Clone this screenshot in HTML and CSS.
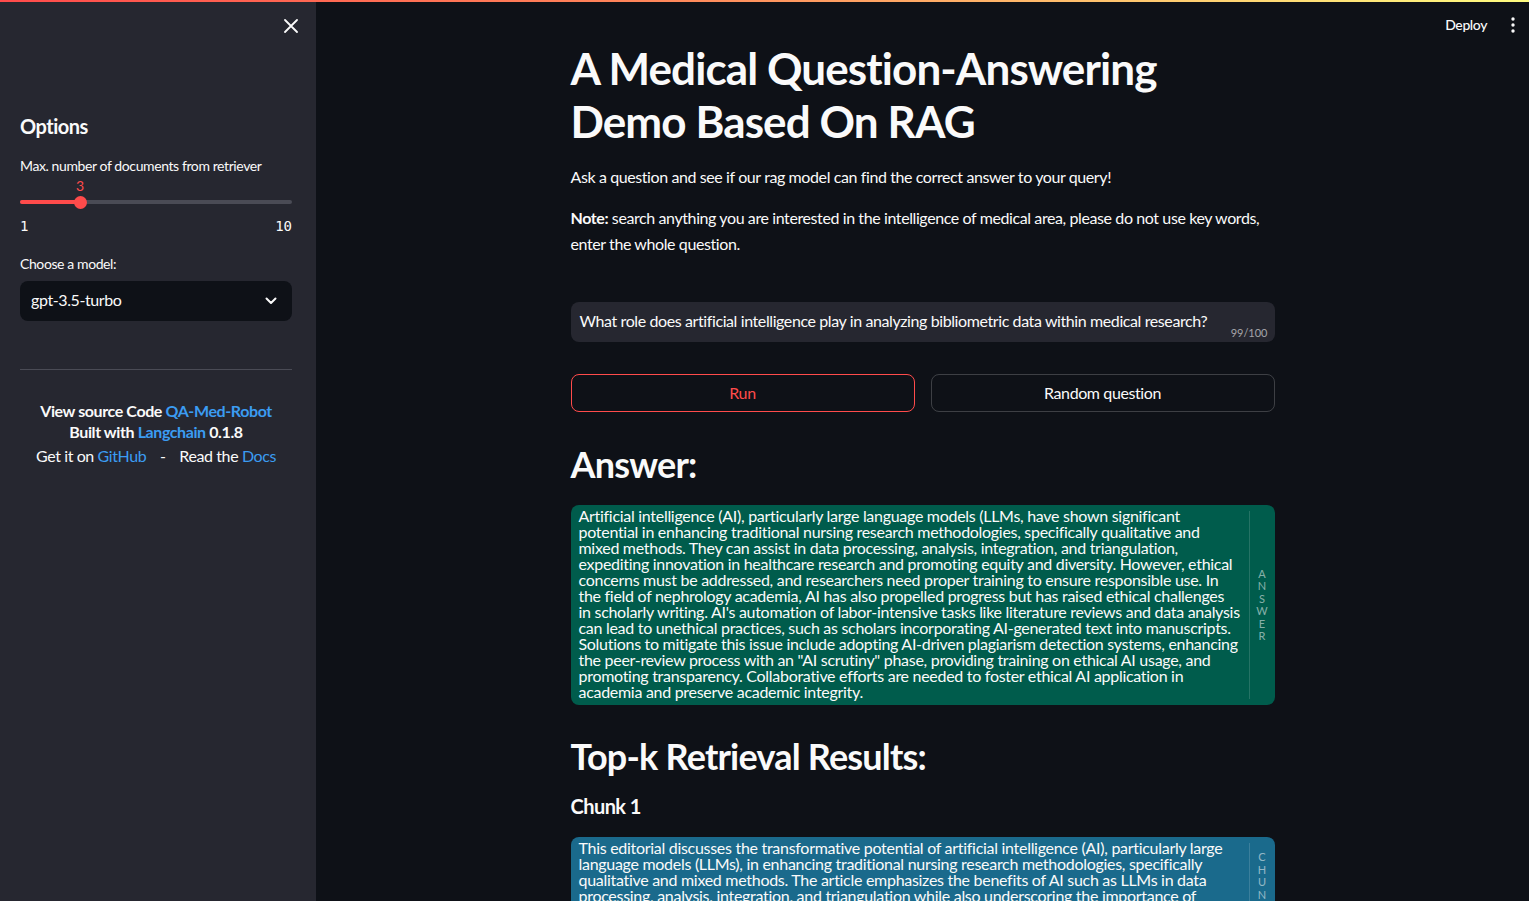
FILE: index.html
```html
<!DOCTYPE html>
<html lang="en">
<head>
<meta charset="utf-8">
<title>Medical QA RAG Demo</title>
<link rel="stylesheet" href="styles.css">
</head>
<body>
<div class="app">
  <div class="topline"></div>
  <aside class="sidebar">
    <div class="close-row">
      <svg class="close" width="14" height="14" viewBox="0 0 14 14"><path d="M1 1L13 13M13 1L1 13" stroke="#fafafa" stroke-width="1.8" stroke-linecap="round"/></svg>
    </div>
    <h2 class="side-title">Options</h2>
    <div class="side-label">Max. number of documents from retriever</div>
    <div class="slider">
      <div class="slider-value">3</div>
      <div class="track"><div class="fill" style="width:22.2%"></div><div class="thumb" style="left:22.2%"></div></div>
      <div class="ticks"><span>1</span><span>10</span></div>
    </div>
    <div class="side-label model-label">Choose a model:</div>
    <div class="select">
      <span>gpt-3.5-turbo</span>
      <svg width="12" height="8" viewBox="0 0 12 8"><path d="M1.5 1.5L6 6L10.5 1.5" stroke="#fafafa" stroke-width="2" fill="none" stroke-linecap="round" stroke-linejoin="round"/></svg>
    </div>
    <hr class="side-hr">
    <div class="credits">
      <div class="bold">View source Code <a href="#">QA-Med-Robot</a></div>
      <div class="bold">Built with <a href="#">Langchain</a> 0.1.8</div>
      <div class="plain">Get it on <a href="#">GitHub</a> <span class="dash">-</span> Read the <a href="#">Docs</a></div>
    </div>
  </aside>
  <main class="main">
    <header class="header">
      <span class="deploy">Deploy</span>
      <svg width="4" height="16" viewBox="0 0 4 16"><circle cx="2" cy="2" r="1.7" fill="#fafafa"/><circle cx="2" cy="8" r="1.7" fill="#fafafa"/><circle cx="2" cy="14" r="1.7" fill="#fafafa"/></svg>
    </header>
    <div class="block">
      <h1 class="title">A Medical Question-Answering<br>Demo Based On RAG</h1>
      <p class="intro">Ask a question and see if our rag model can find the correct answer to your query!</p>
      <p class="note"><strong>Note:</strong> search anything you are interested in the intelligence of medical area, please do not use key words, enter the whole question.</p>
      <div class="input">
        <span class="input-text">What role does artificial intelligence play in analyzing bibliometric data within medical research?</span>
        <span class="counter">99/100</span>
      </div>
      <div class="buttons">
        <button class="btn btn-run">Run</button>
        <button class="btn">Random question</button>
      </div>
      <h2 class="section">Answer:</h2>
      <div class="card card-answer">
        <div class="card-text">Artificial intelligence (AI), particularly large language models (LLMs, have shown significant<br>potential in enhancing traditional nursing research methodologies, specifically qualitative and<br>mixed methods. They can assist in data processing, analysis, integration, and triangulation,<br>expediting innovation in healthcare research and promoting equity and diversity. However, ethical<br>concerns must be addressed, and researchers need proper training to ensure responsible use. In<br>the field of nephrology academia, AI has also propelled progress but has raised ethical challenges<br>in scholarly writing. AI's automation of labor-intensive tasks like literature reviews and data analysis<br>can lead to unethical practices, such as scholars incorporating AI-generated text into manuscripts.<br>Solutions to mitigate this issue include adopting AI-driven plagiarism detection systems, enhancing<br>the peer-review process with an "AI scrutiny" phase, providing training on ethical AI usage, and<br>promoting transparency. Collaborative efforts are needed to foster ethical AI application in<br>academia and preserve academic integrity.</div>
        <div class="card-label"><span>A</span><span>N</span><span>S</span><span>W</span><span>E</span><span>R</span></div>
      </div>
      <h2 class="section section-topk">Top-k Retrieval Results:</h2>
      <h4 class="chunk-title">Chunk 1</h4>
      <div class="card card-chunk">
        <div class="card-text">This editorial discusses the transformative potential of artificial intelligence (AI), particularly large<br>language models (LLMs), in enhancing traditional nursing research methodologies, specifically<br>qualitative and mixed methods. The article emphasizes the benefits of AI such as LLMs in data<br>processing, analysis, integration, and triangulation while also underscoring the importance of<br>ethical considerations and proper training of researchers to ensure responsible use of these tools.</div>
        <div class="card-label"><span>C</span><span>H</span><span>U</span><span>N</span><span>K</span></div>
      </div>
    </div>
  </main>
</div>
</body>
</html>
```

FILE: styles.css
```css
* { box-sizing: border-box; }
html, body { margin: 0; padding: 0; height: 100%; }
body {
  background: #0e1117;
  color: #fafafa;
  font-family: "Lato", "Noto Sans", sans-serif;
  letter-spacing: -0.025em;
  overflow: hidden;
}
a { color: #3b9cf2; text-decoration: none; }

.app { position: relative; display: flex; height: 100vh; }
.topline {
  position: absolute; top: 0; left: 0; right: 0; height: 2px; z-index: 5;
  background: linear-gradient(90deg, #ff4b4b 0%, #ff8a5b 45%, #fffd80 100%);
}

/* Sidebar */
.sidebar {
  width: 316px; flex: 0 0 316px;
  background: #262730;
  padding: 0 24px 0 20px;
  display: flex; flex-direction: column;
}
.close-row { height: 52px; display: flex; justify-content: flex-end; align-items: flex-end; padding-bottom: 19px; margin-right: -6px; }
.side-title { font-size: 20px; font-weight: 700; margin: 62px 0 0; line-height: 24px; letter-spacing: -0.5px; }
.side-label { font-size: 14px; line-height: 20px; margin-top: 18px; }
.slider { margin-top: 0; }
.slider-value { color: #ff4b4b; font-size: 14px; line-height: 20px; padding-left: 56px; width: 120px; }
.track { position: relative; height: 4px; background: #4a4b55; border-radius: 2px; margin-top: 4px; }
.fill { position: absolute; left: 0; top: 0; bottom: 0; background: #ff4b4b; border-radius: 2px; }
.thumb { position: absolute; top: 50%; width: 13px; height: 13px; margin: -6.5px 0 0 -6.5px; background: #ff4b4b; border-radius: 50%; }
.ticks { display: flex; justify-content: space-between; font-family: "DejaVu Sans Mono", monospace; font-size: 14px; line-height: 20px; margin-top: 12px; letter-spacing: 0; }
.model-label { margin-top: 18px; }
.select {
  margin-top: 7px; height: 40px; border-radius: 8px; background: #0e1117;
  display: flex; align-items: center; justify-content: space-between;
  padding: 0 15px 0 11px; font-size: 16px; line-height: 20px; padding-bottom: 3px;
}
.select svg { margin-top: 2px; }
.side-hr { border: 0; border-top: 1px solid #4a4b55; margin: 48px 0 0; }
.credits { margin-top: 30px; text-align: center; font-size: 16px; line-height: 21px; }
.credits .bold { font-weight: 700; }
.credits .plain { margin-top: 3px; }
.dash { margin: 0 10px; }

/* Main */
.main { flex: 1; position: relative; display: flex; justify-content: center; }
.header { position: absolute; top: 16px; right: 14px; display: flex; align-items: center; gap: 24px; font-size: 14px; }
.deploy { font-weight: 500; }
.block { width: 704px; padding-top: 42px; }
.title { font-size: 44px; font-weight: 700; line-height: 53px; margin: 0; letter-spacing: -0.9px; }
.intro { font-size: 16px; line-height: 26px; margin: 16px 0 0; }
.note { font-size: 16px; line-height: 26px; margin: 15px 0 0; }
.input {
  margin-top: 45px; height: 40px; background: #262730; border-radius: 8px;
  position: relative; display: flex; align-items: center; padding: 0 9px 3px; font-size: 16px;
}
.counter { position: absolute; right: 7px; bottom: 3px; font-size: 11px; color: rgba(250,250,250,0.6); letter-spacing: 0; }
.buttons { margin-top: 32px; display: flex; gap: 16px; }
.btn {
  flex: 1; height: 38px; border-radius: 8px; background: transparent;
  border: 1px solid rgba(250,250,250,0.2); color: #fafafa;
  font-family: inherit; font-size: 16px; letter-spacing: -0.025em; padding-bottom: 3px;
}
.btn-run { border-color: #ff4b4b; color: #ff4b4b; }
.section { font-size: 36px; font-weight: 700; line-height: 40px; margin: 32px 0 0; letter-spacing: -0.8px; }
.section-topk { margin-top: 31px; }
.card {
  display: flex; border-radius: 8px; margin-top: 21px;
}
.card-answer { background: #005c4c; }
.card-chunk { background: #1a6a8c; margin-top: 19px; }
.card-text { flex: 1; padding: 3px 6px 5px 8px; font-size: 16px; line-height: 16px; white-space: nowrap; overflow: hidden; letter-spacing: -0.29px; }
.card-label {
  width: 26px; margin: 6px 0; border-left: 1px solid rgba(250,250,250,0.15);
  display: flex; flex-direction: column; justify-content: center; align-items: center;
  font-size: 11px; line-height: 12.5px; color: rgba(250,250,250,0.55); letter-spacing: 0;
}
.card-chunk .card-label { justify-content: flex-start; padding-top: 8px; }
.chunk-title { font-size: 20px; font-weight: 700; line-height: 24px; margin: 18px 0 0; letter-spacing: -0.55px; }
```
